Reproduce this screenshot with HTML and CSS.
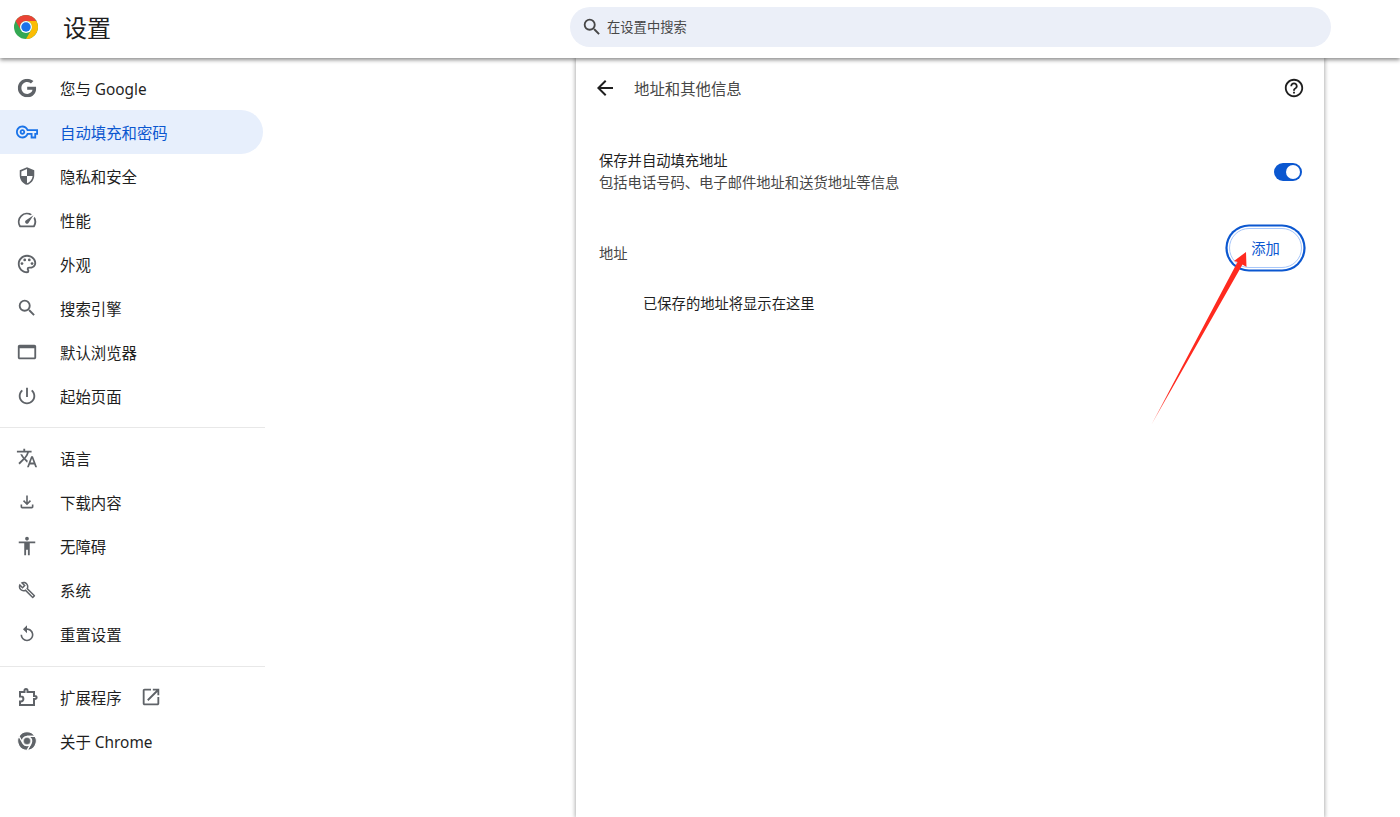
FILE: index.html
```html
<!DOCTYPE html>
<html lang="zh-CN">
<head>
    <meta charset="UTF-8">
    <meta name="viewport" content="width=device-width, initial-scale=1.0">
    <title>设置</title>
    <link rel="stylesheet" href="styles.css">
</head>
<body>
    <header class="topbar">
        <div class="brand">
            <svg class="logo" viewBox="0 0 48 48">
                <circle cx="24" cy="24" r="24" fill="#34a853"/>
                <path fill="#ea4335" d="M3.22 12A24 24 0 0 1 44.78 12H24A12 12 0 0 0 13.61 30Z"/>
                <path fill="#fbbc04" d="M44.78 12A24 24 0 0 1 24 48L34.39 30A12 12 0 0 0 24 12Z"/>
                <circle cx="24" cy="24" r="12" fill="#fff"/>
                <circle cx="24" cy="24" r="9.5" fill="#1a73e8"/>
            </svg>
            <h1 class="brand-title">设置</h1>
        </div>
        <div class="search">
            <svg class="search-icon" viewBox="0 0 24 24"><path d="M15.5 14h-.79l-.28-.27A6.471 6.471 0 0 0 16 9.5 6.5 6.5 0 1 0 9.5 16c1.61 0 3.09-.59 4.23-1.57l.27.28v.79l5 4.99L20.49 19l-4.99-5zm-6 0C7.01 14 5 11.99 5 9.5S7.01 5 9.5 5 14 7.01 14 9.5 11.99 14 9.5 14z"/></svg>
            <span class="search-text">在设置中搜索</span>
        </div>
    </header>

    <div class="layout">
        <nav class="sidebar">
            <a class="nav-item">
                <svg class="icon icon-g" viewBox="0 0 24 24"><path d="M12.24 10.285V14.4h6.806c-.275 1.765-2.056 5.174-6.806 5.174-4.095 0-7.439-3.389-7.439-7.574s3.345-7.574 7.439-7.574c2.33 0 3.891.989 4.785 1.849l3.254-3.138C18.189 1.186 15.479 0 12.24 0c-6.635 0-12 5.365-12 12s5.365 12 12 12c6.926 0 11.52-4.869 11.52-11.726 0-.788-.085-1.39-.189-1.989H12.24z"/></svg>
                <span>您与 Google</span>
            </a>
            <a class="nav-item active">
                <svg class="icon" viewBox="0 0 24 24"><path d="M22 19h-6v-4h-2.68c-1.14 2.42-3.6 4-6.32 4-3.86 0-7-3.14-7-7s3.14-7 7-7c2.72 0 5.17 1.58 6.32 4H24v6h-2v4zm-4-2h2v-4h2v-2H11.94l-.23-.67C11.01 8.34 9.11 7 7 7c-2.76 0-5 2.24-5 5s2.24 5 5 5c2.11 0 4.01-1.34 4.71-3.33l.23-.67H18v4zM7 15c-1.65 0-3-1.35-3-3s1.35-3 3-3 3 1.35 3 3-1.35 3-3 3zm0-4c-.55 0-1 .45-1 1s.45 1 1 1 1-.45 1-1-.45-1-1-1z"/></svg>
                <span>自动填充和密码</span>
            </a>
            <a class="nav-item">
                <svg class="icon icon-sm" viewBox="0 0 24 24"><path d="M12 1L3 5v6c0 5.55 3.84 10.74 9 12 5.16-1.26 9-6.45 9-12V5l-9-4zm0 10.99h7c-.53 4.12-3.28 7.79-7 8.94V12H5V6.3l7-3.11v8.8z"/></svg>
                <span>隐私和安全</span>
            </a>
            <a class="nav-item">
                <svg class="icon" viewBox="0 0 24 24"><path d="M20.38 8.57l-1.23 1.85a8 8 0 0 1-.22 7.58H5.07A8 8 0 0 1 15.58 6.85l1.85-1.23A10 10 0 0 0 3.35 19a2 2 0 0 0 1.72 1h13.85a2 2 0 0 0 1.74-1 10 10 0 0 0-.27-10.44zm-9.79 6.84a2 2 0 0 0 2.83 0l5.66-8.49-8.49 5.66a2 2 0 0 0 0 2.83z"/></svg>
                <span>性能</span>
            </a>
            <a class="nav-item">
                <svg class="icon" viewBox="0 0 24 24"><path d="M12 22C6.49 22 2 17.51 2 12S6.49 2 12 2s10 4.04 10 9c0 3.31-2.69 6-6 6h-1.77c-.28 0-.5.22-.5.5 0 .12.05.23.13.33.41.47.64 1.06.64 1.67A2.5 2.5 0 0 1 12 22zm0-18c-4.41 0-8 3.59-8 8s3.59 8 8 8c.28 0 .5-.22.5-.5a.54.54 0 0 0-.14-.35c-.41-.46-.63-1.05-.63-1.65a2.5 2.5 0 0 1 2.5-2.5H16c2.21 0 4-1.79 4-4 0-3.86-3.59-7-8-7z"/><circle cx="6.5" cy="11.5" r="1.5"/><circle cx="9.5" cy="7.5" r="1.5"/><circle cx="14.5" cy="7.5" r="1.5"/><circle cx="17.5" cy="11.5" r="1.5"/></svg>
                <span>外观</span>
            </a>
            <a class="nav-item">
                <svg class="icon" viewBox="0 0 24 24"><path d="M15.5 14h-.79l-.28-.27A6.471 6.471 0 0 0 16 9.5 6.5 6.5 0 1 0 9.5 16c1.61 0 3.09-.59 4.23-1.57l.27.28v.79l5 4.99L20.49 19l-4.99-5zm-6 0C7.01 14 5 11.99 5 9.5S7.01 5 9.5 5 14 7.01 14 9.5 11.99 14 9.5 14z"/></svg>
                <span>搜索引擎</span>
            </a>
            <a class="nav-item">
                <svg class="icon" viewBox="0 0 24 24"><path d="M20 4H4c-1.1 0-2 .9-2 2v12c0 1.1.9 2 2 2h16c1.1 0 2-.9 2-2V6c0-1.1-.9-2-2-2zm0 14H4V8h16v10z"/></svg>
                <span>默认浏览器</span>
            </a>
            <a class="nav-item">
                <svg class="icon" viewBox="0 0 24 24"><path d="M13 3h-2v10h2V3zm4.83 2.17l-1.42 1.42C17.99 7.86 19 9.81 19 12c0 3.87-3.13 7-7 7s-7-3.13-7-7c0-2.19 1.01-4.14 2.58-5.42L6.17 5.17C4.23 6.82 3 9.26 3 12c0 4.97 4.03 9 9 9s9-4.03 9-9c0-2.74-1.23-5.18-3.17-6.83z"/></svg>
                <span>起始页面</span>
            </a>
            <div class="divider"></div>
            <a class="nav-item">
                <svg class="icon" viewBox="0 0 24 24"><path d="M12.87 15.07l-2.54-2.51.03-.03c1.74-1.94 2.98-4.17 3.71-6.53H17V4h-7V2H8v2H1v1.99h11.17C11.5 7.92 10.44 9.75 9 11.35 8.07 10.32 7.3 9.19 6.69 8h-2c.73 1.63 1.73 3.17 2.98 4.56l-5.09 5.02L4 19l5-5 3.11 3.11.76-2.04zM18.5 10h-2L12 22h2l1.12-3h4.75L21 22h2l-4.5-12zm-2.62 7l1.62-4.33L19.12 17h-3.24z"/></svg>
                <span>语言</span>
            </a>
            <a class="nav-item">
                <svg class="icon icon-sm" viewBox="0 0 24 24"><path d="M18 15v3H6v-3H4v3c0 1.1.9 2 2 2h12c1.1 0 2-.9 2-2v-3h-2zm-1-4l-1.41-1.41L13 12.17V4h-2v8.17L8.41 9.59 7 11l5 5 5-5z"/></svg>
                <span>下载内容</span>
            </a>
            <a class="nav-item">
                <svg class="icon" viewBox="0 0 24 24"><path d="M12 2c1.1 0 2 .9 2 2s-.9 2-2 2-2-.9-2-2 .9-2 2-2zm9 7h-6v13h-2v-6h-2v6H9V9H3V7h18v2z"/></svg>
                <span>无障碍</span>
            </a>
            <a class="nav-item">
                <svg class="icon icon-xs" viewBox="0 0 24 24"><path d="M22.61 18.99l-9.08-9.08c.93-2.34.45-5.1-1.44-7C9.79.61 6.21.4 3.66 2.26L7.5 6.11 6.08 7.52 2.25 3.69C.39 6.23.6 9.82 2.9 12.11c1.86 1.86 4.57 2.35 6.89 1.48l9.11 9.11c.39.39 1.02.39 1.41 0l2.3-2.3c.4-.38.4-1.01 0-1.41zm-3 1.6l-9.46-9.46c-.61.45-1.29.72-2 .82-1.36.2-2.79-.21-3.83-1.25C3.37 9.76 2.93 8.5 3 7.26l3.09 3.09 4.24-4.24-3.09-3.09c1.24-.07 2.49.37 3.44 1.31 1.08 1.08 1.49 2.57 1.24 3.96-.12.71-.42 1.37-.88 1.96l9.45 9.45-.88.89z"/></svg>
                <span>系统</span>
            </a>
            <a class="nav-item">
                <svg class="icon icon-sm" viewBox="0 0 24 24"><path d="M12 5V1L7 6l5 5V7c3.31 0 6 2.69 6 6s-2.69 6-6 6-6-2.69-6-6H4c0 4.42 3.58 8 8 8s8-3.58 8-8-3.58-8-8-8z"/></svg>
                <span>重置设置</span>
            </a>
            <div class="divider divider-low"></div>
            <a class="nav-item">
                <svg class="icon" viewBox="0 0 22 22"><path class="outline" d="M4 6H8.5V4.6A1.5 1.5 0 0 1 11.5 4.6V6H18V9.9H19A1.2 1.2 0 0 1 19 13.1H18V19H4V15.4H5A2.4 2.4 0 0 0 5 10.6H4Z"/></svg>
                <span>扩展程序</span>
                <svg class="icon external" viewBox="0 0 24 24"><path d="M19 19H5V5h7V3H5c-1.11 0-2 .9-2 2v14c0 1.1.89 2 2 2h14c1.1 0 2-.9 2-2v-7h-2v7zM14 3v2h3.59l-9.83 9.83 1.41 1.41L19 6.41V10h2V3h-7z"/></svg>
            </a>
            <a class="nav-item">
                <svg class="icon icon-g chrome-mono" viewBox="0 0 48 48">
                    <path d="M3.22 12A24 24 0 0 1 44.78 12H24A12 12 0 0 0 13.61 30Z"/>
                    <path d="M44.78 12A24 24 0 0 1 24 48L34.39 30A12 12 0 0 0 24 12Z"/>
                    <path d="M24 48A24 24 0 0 1 3.22 12L13.61 30A12 12 0 0 0 34.39 30Z"/>
                    <circle class="center" cx="24" cy="24" r="9"/>
                </svg>
                <span>关于 Chrome</span>
            </a>
        </nav>

        <main class="content">
            <section class="card">
                <div class="subpage-head">
                    <svg class="back" viewBox="0 0 24 24"><path d="M20 11H7.83l5.59-5.59L12 4l-8 8 8 8 1.41-1.41L7.83 13H20v-2z"/></svg>
                    <h2 class="subpage-title">地址和其他信息</h2>
                    <svg class="help" viewBox="0 0 24 24"><path d="M11 18h2v-2h-2v2zm1-16C6.48 2 2 6.48 2 12s4.48 10 10 10 10-4.48 10-10S17.52 2 12 2zm0 18c-4.41 0-8-3.59-8-8s3.59-8 8-8 8 3.59 8 8-3.59 8-8 8zm0-14c-2.21 0-4 1.79-4 4h2c0-1.1.9-2 2-2s2 .9 2 2c0 2-3 1.75-3 5h2c0-2.25 3-2.5 3-5 0-2.21-1.79-4-4-4z"/></svg>
                </div>

                <div class="toggle-row">
                    <div>
                        <div class="row-label">保存并自动填充地址</div>
                        <div class="row-sub">包括电话号码、电子邮件地址和送货地址等信息</div>
                    </div>
                    <div class="toggle"><div class="knob"></div></div>
                </div>

                <div class="address-row">
                    <span class="address-label">地址</span>
                    <button class="add-btn">添加</button>
                </div>

                <p class="empty">已保存的地址将显示在这里</p>
            </section>
        </main>
    </div>

    <!-- annotation drawn over the screenshot -->
    <svg class="arrow" viewBox="0 0 1400 817">
        <defs>
            <linearGradient id="fade" x1="1152" y1="424" x2="1170" y2="391" gradientUnits="userSpaceOnUse">
                <stop offset="0" stop-color="#ff2a1f" stop-opacity="0.6"/>
                <stop offset="1" stop-color="#ff2a1f"/>
            </linearGradient>
        </defs>
        <path fill="url(#fade)" d="M1151.5 424.5L1237.5 262 1234 261 1246 252 1246.5 267 1242.5 264.5Z"/>
    </svg>
</body>
</html>
```

FILE: styles.css
```css
* {
    box-sizing: border-box;
}
html, body {
    height: 100%;
}
body {
    margin: 0;
    display: flex;
    flex-direction: column;
    overflow: hidden;
    background-color: #fff;
    color: #1f1f1f;
    font-family: "Noto Sans", "Noto Sans CJK SC", sans-serif;
}

/* top bar */
.topbar {
    position: relative;
    z-index: 2;
    flex: none;
    height: 58px;
    display: flex;
    align-items: flex-start;
    background-color: #fff;
    box-shadow: 0 2px 4px rgba(0,0,0,0.45);
}
.brand {
    width: 570px;
    height: 54px;
    padding-left: 14px;
    display: flex;
    align-items: center;
    gap: 25px;
}
.logo {
    width: 24px;
    height: 24px;
}
.brand-title {
    margin: 0;
    font-size: 24px;
    font-weight: 400;
    line-height: 30px;
    position: relative;
    top: 1px;
}
.search {
    width: 761px;
    height: 40px;
    margin-top: 7px;
    padding-left: 11px;
    display: flex;
    align-items: center;
    gap: 4px;
    border-radius: 20px;
    background-color: #ebeff8;
    color: #474747;
    font-size: 13.3px;
}
.search-icon {
    width: 22px;
    height: 22px;
    fill: #474747;
}
.search-text {
    margin-bottom: 2px;
}

/* page */
.layout {
    flex: 1;
    min-height: 0;
    display: flex;
}
.sidebar {
    flex: none;
    width: 265px;
    padding-top: 8px;
}
.nav-item {
    height: 44px;
    width: 263px;
    padding-left: 16px;
    display: flex;
    align-items: center;
    gap: 22px;
    border-radius: 0 22px 22px 0;
    font-size: 15.4px;
    color: #1f1f1f;
}
.nav-item.active {
    background-color: #e7effc;
    color: #0b57d0;
}
.icon {
    flex: none;
    width: 22px;
    height: 22px;
    fill: #5f6368;
}
.active .icon {
    fill: #1a73e8;
}
.icon-sm {
    transform: scale(0.88);
}
.icon-xs {
    transform: scale(0.82);
}
.icon-g {
    transform: scale(0.85);
}
.outline {
    fill: none;
    stroke: #5f6368;
    stroke-width: 2;
}
.chrome-mono path {
    stroke: #fff;
    stroke-width: 3;
}
.center {
    stroke: #fff;
}
.external {
    margin-left: -4px;
}
.divider {
    height: 1px;
    width: 265px;
    margin: 9px 0 8px;
    background-color: #e8e8e8;
}
.divider-low {
    margin-top: 10px;
}

.content {
    flex: 1;
    padding-left: 311px;
}
.card {
    width: 748px;
    height: 100%;
    background-color: #fff;
    box-shadow: 0 0 4px 1px rgba(0,0,0,0.3);
}
.subpage-head {
    height: 60px;
    padding: 0 19px 0 17px;
    display: flex;
    align-items: center;
}
.back {
    width: 24px;
    height: 24px;
    fill: #1f1f1f;
}
.subpage-title {
    flex: 1;
    margin: 0 0 0 17px;
    font-size: 15.4px;
    font-weight: 400;
    color: #474747;
}
.help {
    width: 22px;
    height: 22px;
    fill: #1f1f1f;
}
.toggle-row {
    margin-top: 32px;
    padding: 0 22px 0 23px;
    display: flex;
    align-items: center;
    justify-content: space-between;
}
.row-label {
    font-size: 14.3px;
    line-height: 22px;
}
.row-sub {
    font-size: 14.3px;
    line-height: 22px;
    color: #474747;
}
.toggle {
    width: 28px;
    height: 18px;
    padding: 2px 2px 2px 12px;
    border-radius: 9px;
    background-color: #0b57d0;
}
.knob {
    width: 14px;
    height: 14px;
    border-radius: 50%;
    background-color: #fff;
}
.address-row {
    margin-top: 34px;
    padding: 0 22px 0 23px;
    display: flex;
    align-items: center;
    justify-content: space-between;
}
.address-label {
    font-size: 14.3px;
    color: #474747;
    position: relative;
    top: 4px;
}
.add-btn {
    width: 73px;
    height: 40px;
    padding: 0 0 2px;
    border: 1px solid #a8c7fa;
    border-radius: 20px;
    box-shadow: 0 0 0 1.4px #fff, 0 0 0 3.6px #0b57d0;
    background-color: #fff;
    color: #0b57d0;
    font-family: inherit;
    font-size: 14.3px;
}
.empty {
    margin: 25px 0 0 67px;
    font-size: 14.3px;
    line-height: 22px;
}

/* red arrow on top of the page */
.arrow {
    position: absolute;
    left: 0;
    top: 0;
    width: 1400px;
    height: 817px;
    z-index: 3;
    pointer-events: none;
}
```
